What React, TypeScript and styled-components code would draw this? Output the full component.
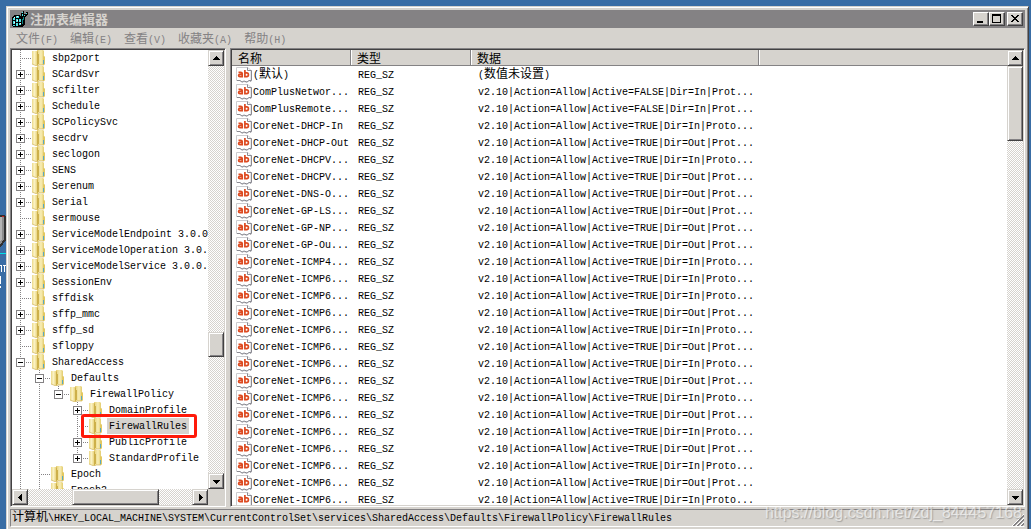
import React from "react";
import styled, { createGlobalStyle, css } from "styled-components";

const face = "#d6d3ce";
const shadow = "#848284";
const dark = "#424142";
const checker = "conic-gradient(#fff 25%, #d6d3ce 0 50%, #fff 0 75%, #d6d3ce 0) 0 0 / 2px 2px";

const Global = createGlobalStyle`
  * { box-sizing: border-box; }
  body {
    margin: 0;
    background: #396da5;
    font-family: "Liberation Mono", "Noto Sans CJK SC", monospace;
    font-size: 10px;
    line-height: 16px;
    color: #000;
    overflow: hidden;
  }
`;

const raised = css`
  border: 1px solid;
  border-color: ${face} ${dark} ${dark} ${face};
  box-shadow: inset 1px 1px #fff, inset -1px -1px ${shadow};
  background: ${face};
`;

const Desktop = styled.div`
  position: relative;
  height: 100vh;
  padding: 6px 2px 0 6px;
`;

const DesktopIcon = styled.svg`
  position: absolute;
  left: 0;
  top: 212px;
`;

const Window = styled.main`
  display: flex;
  flex-direction: column;
  height: 100%;
  background: ${face};
  border: 1px solid;
  border-width: 1px 1px 0;
  border-color: ${face} ${dark} ${dark} ${face};
  box-shadow: inset 1px 1px #fff, inset -1px 0 ${shadow};
  padding: 3px 3px 2px;
`;

const TitleBar = styled.header`
  display: flex;
  align-items: center;
  flex: none;
  height: 18px;
  padding: 0 2px;
  background: ${shadow};
`;

const Title = styled.h1`
  flex: 1;
  margin: 0 0 0 2px;
  font: bold 13px/18px "Noto Sans CJK SC", sans-serif;
  color: ${face};
`;

const CaptionButton = styled.button<{ $gap?: boolean }>`
  ${raised}
  border-color: #fff ${dark} ${dark} #fff;
  box-shadow: inset -1px -1px ${shadow};
  width: 16px;
  height: 14px;
  padding: 0;
  margin-left: ${(p) => (p.$gap ? 2 : 0)}px;
  svg { display: block; }
`;

const MenuBar = styled.nav`
  display: flex;
  flex: none;
  height: 20px;
`;

const MenuButton = styled.button`
  border: 0;
  padding: 4px 6px 0;
  background: none;
  font: inherit;
  line-height: 16px;
  color: ${shadow};
  white-space: nowrap;
`;

const Cjk = styled.span`
  font-family: "Noto Sans CJK SC", sans-serif;
  font-size: 12px;
  line-height: 12px;
`;

const Panes = styled.div`
  display: grid;
  grid-template-columns: 216px minmax(0, 1fr);
  gap: 4px;
  flex: 1;
  min-height: 0;
`;

const Pane = styled.section`
  display: grid;
  grid-template-columns: minmax(0, 1fr) 16px;
  grid-template-rows: minmax(0, 1fr) auto;
  min-height: 0;
  background: #fff;
  border: 1px solid;
  border-color: ${shadow} #fff #fff ${shadow};
  box-shadow: inset 1px 1px ${dark}, inset -1px -1px ${face};
  padding: 1px;
`;

const Tree = styled.ul`
  list-style: none;
  margin: 0;
  padding: 0;
  overflow: hidden;
`;

const TreeRow = styled.li`
  display: flex;
  align-items: center;
  height: 16px;
  svg { display: block; flex: none; }
`;

const Label = styled.span<{ $selected?: boolean }>`
  position: relative;
  margin-left: 3px;
  padding: 2px 2px 0;
  line-height: 14px;
  white-space: pre;
  background: ${(p) => (p.$selected ? face : "none")};
`;

const Marker = styled.span`
  position: absolute;
  z-index: 1;
  inset: -4px -8px -4px -26px;
  border: 3px solid #ff1a0a;
  border-radius: 3px;
`;

const ScrollBar = styled.div<{ $horizontal?: boolean }>`
  display: flex;
  flex-direction: ${(p) => (p.$horizontal ? "row" : "column")};
  background: ${checker};
`;

const ScrollButton = styled.button`
  ${raised}
  flex: none;
  width: 16px;
  height: 16px;
  padding: 0;
  svg { display: block; }
`;

const Track = styled.div<{ $horizontal?: boolean }>`
  flex: 1;
  display: flex;
  flex-direction: ${(p) => (p.$horizontal ? "row" : "column")};
`;

const Space = styled.div<{ $grow: number }>`
  flex: ${(p) => p.$grow} 1 0;
`;

const Thumb = styled.div<{ $size: number }>`
  ${raised}
  flex: 0 0 ${(p) => p.$size}px;
`;

const Corner = styled.div`
  background: ${face};
`;

const ListView = styled.div`
  overflow: hidden;
`;

const Table = styled.table`
  width: 100%;
  table-layout: fixed;
  border-collapse: separate;
  border-spacing: 0;
`;

const Head = styled.th<{ $width?: number }>`
  width: ${(p) => (p.$width ? `${p.$width}px` : "auto")};
  height: 16px;
  padding: 0 6px;
  background: ${face};
  border-bottom: 1px solid ${shadow};
  box-shadow: inset 1px 0 #fff, inset -1px 0 ${shadow};
  font: 12px/15px "Noto Sans CJK SC", sans-serif;
  text-align: left;
  &:first-child { box-shadow: inset -1px 0 ${shadow}; }
  &:last-child { box-shadow: inset 1px 0 #fff; }
`;

const Cell = styled.td`
  height: 17px;
  padding: 1px 0 0 7px;
  line-height: 16px;
  white-space: nowrap;
`;

const NameCell = styled(Cell)`
  padding: 0 0 0 4px;
`;

const Name = styled.div`
  display: flex;
  height: 17px;
  gap: 1px;
  line-height: 18px;
  svg { display: block; flex: none; }
`;

const StatusBar = styled.footer`
  position: relative;
  display: flex;
  justify-content: space-between;
  align-items: flex-end;
  flex: none;
  height: 18px;
  margin-top: 2px;
  padding-left: 1px;
  border: 1px solid;
  border-color: ${shadow} ${face} #fff ${shadow};
  white-space: nowrap;
  line-height: 14px;
`;

const Watermark = styled.span`
  position: absolute;
  right: 2px;
  top: -6px;
  font: 16px/18px "Liberation Sans", sans-serif;
  color: rgba(255, 255, 255, 0.6);
  text-shadow: 1px 1px 1px rgba(120, 120, 120, 0.5);
`;

const Mixed = ({ text }: { text: string }) => (
  <>
    {text.split(/([\u4e00-\u9fff]+)/).map((part, i) =>
      i % 2 ? <Cjk key={i}>{part}</Cjk> : part
    )}
  </>
);

type Node = { name: string; level: number; box?: "+" | "-"; last?: boolean; selected?: boolean; rails?: number[] };

const nodes: Node[] = [
  { name: "sbp2port", level: 0 },
  { name: "SCardSvr", level: 0, box: "+" },
  { name: "scfilter", level: 0, box: "+" },
  { name: "Schedule", level: 0, box: "+" },
  { name: "SCPolicySvc", level: 0, box: "+" },
  { name: "secdrv", level: 0, box: "+" },
  { name: "seclogon", level: 0, box: "+" },
  { name: "SENS", level: 0, box: "+" },
  { name: "Serenum", level: 0, box: "+" },
  { name: "Serial", level: 0, box: "+" },
  { name: "sermouse", level: 0 },
  { name: "ServiceModelEndpoint 3.0.0", level: 0, box: "+" },
  { name: "ServiceModelOperation 3.0.", level: 0, box: "+" },
  { name: "ServiceModelService 3.0.0.", level: 0, box: "+" },
  { name: "SessionEnv", level: 0, box: "+" },
  { name: "sffdisk", level: 0 },
  { name: "sffp_mmc", level: 0, box: "+" },
  { name: "sffp_sd", level: 0, box: "+" },
  { name: "sfloppy", level: 0 },
  { name: "SharedAccess", level: 0, box: "-" },
  { name: "Defaults", level: 1, box: "-", rails: [0] },
  { name: "FirewallPolicy", level: 2, box: "-", last: true, rails: [0, 1] },
  { name: "DomainProfile", level: 3, box: "+", rails: [0, 1] },
  { name: "FirewallRules", level: 3, selected: true, rails: [0, 1] },
  { name: "PublicProfile", level: 3, box: "+", rails: [0, 1] },
  { name: "StandardProfile", level: 3, box: "+", last: true, rails: [0, 1] },
  { name: "Epoch", level: 1, rails: [0] },
  { name: "Epoch2", level: 1, rails: [0] },
];

const ruleIn = "v2.10|Action=Allow|Active=TRUE|Dir=In|Proto...";
const ruleOut = "v2.10|Action=Allow|Active=TRUE|Dir=Out|Prot...";
const ruleOff = "v2.10|Action=Allow|Active=FALSE|Dir=In|Prot...";

const values: [string, string][] = [
  ["(默认)", "(数值未设置)"],
  ["ComPlusNetwor...", ruleOff],
  ["ComPlusRemote...", ruleOff],
  ["CoreNet-DHCP-In", ruleIn],
  ["CoreNet-DHCP-Out", ruleOut],
  ["CoreNet-DHCPV...", ruleIn],
  ["CoreNet-DHCPV...", ruleOut],
  ["CoreNet-DNS-O...", ruleOut],
  ["CoreNet-GP-LS...", ruleOut],
  ["CoreNet-GP-NP...", ruleOut],
  ["CoreNet-GP-Ou...", ruleOut],
  ["CoreNet-ICMP4...", ruleIn],
  ["CoreNet-ICMP6...", ruleIn],
  ["CoreNet-ICMP6...", ruleIn],
  ["CoreNet-ICMP6...", ruleOut],
  ["CoreNet-ICMP6...", ruleIn],
  ["CoreNet-ICMP6...", ruleOut],
  ["CoreNet-ICMP6...", ruleIn],
  ["CoreNet-ICMP6...", ruleOut],
  ["CoreNet-ICMP6...", ruleIn],
  ["CoreNet-ICMP6...", ruleOut],
  ["CoreNet-ICMP6...", ruleIn],
  ["CoreNet-ICMP6...", ruleOut],
  ["CoreNet-ICMP6...", ruleIn],
  ["CoreNet-ICMP6...", ruleOut],
  ["CoreNet-ICMP6...", ruleIn],
];

const Rail = ({ on }: { on: boolean }) => (
  <svg width="19" height="16" shapeRendering="crispEdges">
    {on && <path d="M8.5 0V16" stroke={shadow} strokeDasharray="1 1" />}
  </svg>
);

const Branch = ({ box, last }: { box?: "+" | "-"; last?: boolean }) => (
  <svg width="19" height="16" shapeRendering="crispEdges" fill="none" stroke={shadow}>
    <path d={`M8.5 0V${last ? 8 : 16}M10 8.5H19`} strokeDasharray="1 1" />
    {box && <path d="M4.5 4.5h8v8h-8z" fill="#fff" />}
    {box && <path d={box === "+" ? "M6 8.5h5M8.5 6v5" : "M6 8.5h5"} stroke="#000" />}
  </svg>
);

const Folder = () => (
  <svg width="16" height="16">
    <defs>
      <linearGradient id="cover">
        <stop offset="0" stopColor="#ecd988" />
        <stop offset="0.4" stopColor="#fbf3c6" />
        <stop offset="1" stopColor="#e3c964" />
      </linearGradient>
      <linearGradient id="back">
        <stop offset="0" stopColor="#e6cf76" />
        <stop offset="0.5" stopColor="#f8eeb6" />
        <stop offset="1" stopColor="#dcc056" />
      </linearGradient>
    </defs>
    <path d="M6 0h6l1 1v5l1 1v7l-1 1H6z" fill="url(#back)" />
    <path d="M12 6l2 1v7l-2 1z" fill="#e2c861" />
    <path d="M1 1l6 0v14l-1 1-5-2z" fill="url(#cover)" />
    <path d="M6 2l1-1v14l-1 1zM7 4h1v10H7z" fill="#cdb04a" />
    <path d="M1 14l5 2h1l1-1h5" fill="none" stroke="#c9aa48" strokeWidth="0.600" />
    <path d="M12 10h1v4h-1z" fill="#58a8c4" />
  </svg>
);

const StringIcon = () => (
  <svg width="16" height="17">
    <path d="M.5 .5H12l3 3v11l-2-1-2 2-3-1-2 1-2-2H.500z" fill="#fff" stroke="#ccccd0" />
    <path d="M11.500 .5v3h4v10l-1 1M1 13.500h3l2 1.500 2-1 3 1 2-1.500h2" fill="none" stroke="#8a8a92" />
    <g fill="none" stroke="#dd4a20" strokeWidth="1.700">
      <path d="M2.500 5.300h2.200q1.500 0 1.500 1.200v4M6.200 7.400H4q-1.400 0-1.400 1.100t1.400 1.100h1.600" />
      <path d="M8.900 3v7.500M9 5.800h1.800q1.600 0 1.600 1.900t-1.600 1.900H9" />
    </g>
  </svg>
);

const RegIcon = () => (
  <svg width="16" height="16" shapeRendering="crispEdges">
    <path d="M0 6l3-2h4l2 2V2h2V0h1v3h2V1h2v2l-2 2-1 2v6l-3 3H1l-1-1z" fill="#000" />
    <path d="M1 7h2v2H1zM4 5h3v2H4zM1 10h2v3H1zM4 8h2v3H4zM7 8h2v3H7zM4 12h2v3H4zM7 12h2v2H7zM1 14h2v1H1zM10 3h1v2h-1zM12 4h1v1h-1zM14 2h1v1h-1zM10 1h1v1h-1z" fill="#4fe3e6" />
    <path d="M2 6h1v1H2zM5 5h1v1H5zM2 11h1v1H2zM8 12h1v1H8zM5 9h1v1H5z" fill="#fff" />
    <path d="M10 8h1v5h-1zM11 6h1v3h-1z" fill="#0a8486" />
  </svg>
);

const arrows = {
  up: "M7 5h1v1h1v1h1v1h1v1H4V8h1V7h1V6h1z",
  down: "M4 6h7v1h-1v1H9v1H8v1H7V9H6V8H5V7H4z",
  left: "M5 7h1V6h1V5h1V4h1v7H8v-1H7V9H6V8H5z",
  right: "M6 4h1v1h1v1h1v1h1v1H9v1H8v1H7v1H6z",
};

const Arrow = ({ to }: { to: keyof typeof arrows }) => (
  <ScrollButton aria-label={to}>
    <svg width="14" height="14" shapeRendering="crispEdges">
      <path d={arrows[to]} />
    </svg>
  </ScrollButton>
);

const Grip = () => (
  <svg width="12" height="12" shapeRendering="crispEdges">
    <path d="M0 12L12 0M4 12l8-8M8 12l4-4" stroke="#fff" />
    <path d="M1 12L12 1M2 12L12 2M5 12l7-7M6 12l6-6M9 12l3-3M10 12l2-2" stroke={shadow} />
  </svg>
);

export default function App() {
  return (
    <Desktop>
      <Global />
      <DesktopIcon width="6" height="80" shapeRendering="crispEdges">
        <path d="M0 3h4l2 2v23l-6 8z" fill="#303030" />
        <path d="M0 5h4v22l-4 6z" fill="#8c8c8c" />
        <path d="M0 5h2v22l-2 3z" fill="#b5b5b5" />
        <path d="M2 4h2v1H2z" fill="#d02020" />
        <path d="M0 41.500h6" stroke="#00e0e8" />
        <path d="M0 53.500h2M1.500 53v7M4.500 54v6M3 53.500h3M.5 64v8M.5 74v2" stroke="#fff" />
      </DesktopIcon>
      <Window>
        <TitleBar>
          <RegIcon />
          <Title>注册表编辑器</Title>
          <CaptionButton aria-label="最小化">
            <svg width="14" height="12" shapeRendering="crispEdges"><path d="M3 8h6v2H3z" /></svg>
          </CaptionButton>
          <CaptionButton aria-label="最大化">
            <svg width="14" height="12" shapeRendering="crispEdges"><path d="M2 1h9v9H2zM3 3v6h7V3z" fillRule="evenodd" /></svg>
          </CaptionButton>
          <CaptionButton aria-label="关闭" $gap>
            <svg width="14" height="12" shapeRendering="crispEdges">
              <path d="M3 2h2v1h1v1h2V3h1V2h2v1h-1v1H9v1H8v1h1v1h1v1h1v1H9V8H8V7H6v1H5v1H3V8h1V7h1V6h1V5H5V4H4V3H3z" />
            </svg>
          </CaptionButton>
        </TitleBar>
        <MenuBar>
          {["文件(F)", "编辑(E)", "查看(V)", "收藏夹(A)", "帮助(H)"].map((m) => (
            <MenuButton key={m}><Mixed text={m} /></MenuButton>
          ))}
        </MenuBar>
        <Panes>
          <Pane>
            <Tree>
              {nodes.map((n) => (
                <TreeRow key={n.name}>
                  {Array.from({ length: n.level }, (_, i) => (
                    <Rail key={i} on={!!n.rails?.includes(i)} />
                  ))}
                  <Branch box={n.box} last={n.last} />
                  <Folder />
                  <Label $selected={n.selected}>
                    {n.name}
                    {n.selected && <Marker />}
                  </Label>
                </TreeRow>
              ))}
            </Tree>
            <ScrollBar>
              <Arrow to="up" />
              <Track>
                <Space $grow={266} />
                <Thumb $size={25} />
                <Space $grow={116} />
              </Track>
              <Arrow to="down" />
            </ScrollBar>
            <ScrollBar $horizontal>
              <Arrow to="left" />
              <Track $horizontal>
                <Space $grow={44} />
                <Thumb $size={87} />
                <Space $grow={33} />
              </Track>
              <Arrow to="right" />
            </ScrollBar>
            <Corner />
          </Pane>
          <Pane>
            <ListView>
              <Table>
                <thead>
                  <tr>
                    <Head $width={119}>名称</Head>
                    <Head $width={120}>类型</Head>
                    <Head $width={288}>数据</Head>
                    <Head />
                  </tr>
                </thead>
                <tbody>
                  {values.map(([name, data], i) => (
                    <tr key={i}>
                      <NameCell>
                        <Name><StringIcon /><span><Mixed text={name} /></span></Name>
                      </NameCell>
                      <Cell>REG_SZ</Cell>
                      <Cell><Mixed text={data} /></Cell>
                      <Cell />
                    </tr>
                  ))}
                </tbody>
              </Table>
            </ListView>
            <ScrollBar>
              <Arrow to="up" />
              <Track>
                <Thumb $size={75} />
              </Track>
              <Arrow to="down" />
            </ScrollBar>
          </Pane>
        </Panes>
        <StatusBar>
          <span><Mixed text="计算机" />\HKEY_LOCAL_MACHINE\SYSTEM\CurrentControlSet\services\SharedAccess\Defaults\FirewallPolicy\FirewallRules</span>
          <Grip />
          <Watermark>https://blog.csdn.net/zdj_844457168</Watermark>
        </StatusBar>
      </Window>
    </Desktop>
  );
}
